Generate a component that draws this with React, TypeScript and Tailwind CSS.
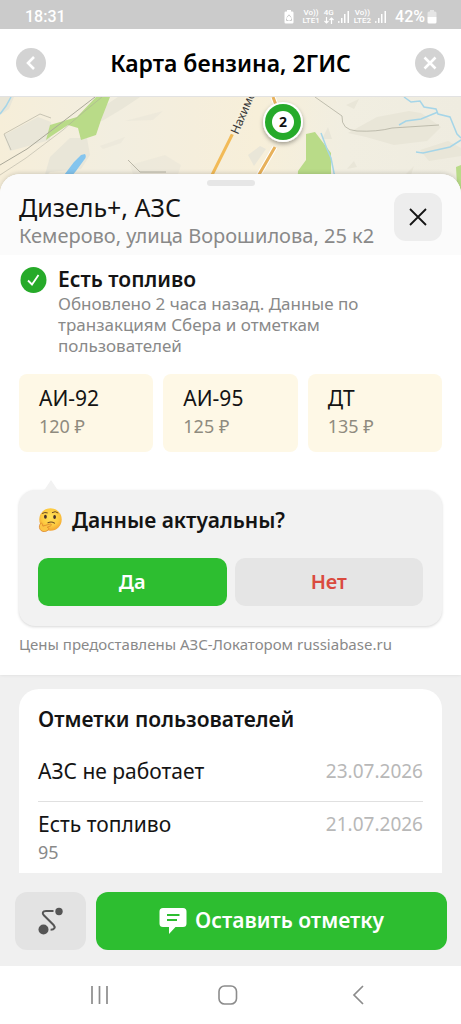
import { ReactNode } from 'react';

type Fuel = { name: string; price: string };
type Mark = { id: number; title: string; date: string; fuel?: string };

const FUELS: Fuel[] = [
  { name: 'АИ-92', price: '120 ₽' },
  { name: 'АИ-95', price: '125 ₽' },
  { name: 'ДТ', price: '135 ₽' },
];

const MARKS: Mark[] = [
  { id: 1, title: 'АЗС не работает', date: '23.07.2026' },
  { id: 2, title: 'Есть топливо', date: '21.07.2026', fuel: '95' },
];

function Signal() {
  return (
    <svg width="12" height="14" viewBox="0 0 12 14" fill="#fff" aria-hidden="true">
      <rect x="0" y="11" width="1.5" height="2" opacity=".8" />
      <rect x="3" y="8" width="1.5" height="5" />
      <rect x="6" y="4" width="1.5" height="9" />
      <rect x="9.5" y="1" width="1.5" height="12" />
    </svg>
  );
}

function NetLabel({ top, children }: { top: string; children: ReactNode }) {
  return (
    <span className="flex flex-col items-center text-[8px] font-medium leading-[8px]">
      <span>{top}</span>
      <span>{children}</span>
    </span>
  );
}

function StatusBar() {
  return (
    <div className="flex h-[29px] items-center justify-between bg-[#cbcbcb] pt-1 pr-6 pl-[25px] font-[Roboto,sans-serif] text-white">
      <span className="text-base font-medium leading-5">18:31</span>
      <div className="flex items-center gap-1">
        <svg width="10" height="14" viewBox="0 0 10 14" className="mr-1" aria-hidden="true">
          <path d="M3 0h4v1.5h1.2A1.3 1.3 0 0 1 9.5 2.8v9.4a1.3 1.3 0 0 1-1.3 1.3H1.8A1.3 1.3 0 0 1 .5 12.2V2.8A1.3 1.3 0 0 1 1.8 1.5H3z" fill="#fff" />
          <path d="M2.8 7.5 5 4.8l2.200 2.700M2.500 8.500v2h2M7.500 8.500v2h-2" fill="none" stroke="#cbcbcb" strokeWidth="1" />
        </svg>
        <NetLabel top="Vo))">LTE1</NetLabel>
        <NetLabel top="4G">
          <svg width="10" height="7" viewBox="0 0 10 7" fill="none" stroke="#fff" strokeWidth="1.2" aria-hidden="true">
            <path d="M2.500 0v6M.500 4l2 2 2-2M7.500 7V1M5.500 3l2-2 2 2" />
          </svg>
        </NetLabel>
        <Signal />
        <NetLabel top="Vo))">LTE2</NetLabel>
        <Signal />
        <span className="ml-1 text-base font-medium leading-5">42%</span>
        <svg width="10" height="14" viewBox="0 0 10 14" className="-ml-0.5" aria-hidden="true">
          <path d="M3 0h4v1.500h1A1.500 1.500 0 0 1 9.500 3v4H.500V3A1.500 1.500 0 0 1 2 1.500h1z" fill="#fff" opacity=".5" />
          <path d="M.500 7h9v5A1.500 1.500 0 0 1 8 13.500H2A1.500 1.500 0 0 1 .500 12z" fill="#fff" />
        </svg>
      </div>
    </div>
  );
}

function Header() {
  return (
    <header className="flex h-[68px] items-center justify-between border-b border-[#e2e2e2] bg-white px-4">
      <button aria-label="Назад" className="flex size-[30px] items-center justify-center rounded-full bg-[#d3d3d3]">
        <svg width="30" height="30" viewBox="0 0 30 30" fill="none" stroke="#fff" strokeWidth="2.6" aria-hidden="true">
          <path d="M18 9l-6 6 6 6" />
        </svg>
      </button>
      <h1 className="text-[23px] font-semibold leading-7 text-black">Карта бензина, 2ГИС</h1>
      <button aria-label="Закрыть" className="flex size-[30px] items-center justify-center rounded-full bg-[#d3d3d3]">
        <svg width="30" height="30" viewBox="0 0 30 30" fill="none" stroke="#fff" strokeWidth="2.6" aria-hidden="true">
          <path d="M9.500 9.500l11 11M20.500 9.500l-11 11" />
        </svg>
      </button>
    </header>
  );
}

function MapView() {
  return (
    <svg viewBox="0 0 461 97" preserveAspectRatio="xMidYMin slice" className="block h-[97px] w-full bg-[#f1eee0]" role="img" aria-label="Карта">
      <defs>
        <linearGradient id="land" x1="0" x2="1" y1="0" y2="0">
          <stop offset="0" stopColor="#f6eed9" />
          <stop offset=".25" stopColor="#f2eee0" />
          <stop offset=".42" stopColor="#f5eedc" />
          <stop offset=".56" stopColor="#f7efd9" />
          <stop offset=".75" stopColor="#f1eee1" />
          <stop offset="1" stopColor="#efece0" />
        </linearGradient>
        <filter id="pinShadow" x="-30%" y="-30%" width="160%" height="170%">
          <feDropShadow dx="0" dy="2" stdDeviation="2" floodOpacity=".35" />
        </filter>
      </defs>
      <rect width="461" height="98" fill="url(#land)" />
      {/* relief */}
      <g fill="#e9e6d8">
        <path d="M0 0h14L9 12 0 18z" />
        <path d="M4 38 38 20l13 5-1 18L10 54z" />
        <path d="M50 60 70 41h17l3 17-9 14-31 3-6 6z" />
        <path d="M85 22 118 0h22l-18 12-20 12z" />
        <path d="M100 49l25-9-4 6-18 6zM130 68l35-10 16 10-3 9h-45zM125 24l38-10-10 9z" opacity=".6" />
        <path d="M348 36 377 20l32-6 12 2 20 14-14 14-33 4-28-8z" />
        <path d="M420 53l28-9 13 7v8l-32 5zM346 8l13-6-5 10zM347 72l7-8 3 6zM406 77l8-8-3 9z" />
        <path d="M248 58l12-9 6 3-12 17zM322 42l6-12 4 12z" />
      </g>
      {/* green zones */}
      <g fill="#b9db88">
        <path d="M46 43 50 28 77 20 96 0h14l-9 23-5 15-15 5-3-12-10-3-18 12z" />
        <path d="M297 98l1-24 8-11V37l9-2 16 21v42zM456 70l5-2v30l-4-10z" />
      </g>
      {/* water */}
      <path d="M58 86 74 65l7-7 4-1q2 3-1 6l-8 11-10 12z" fill="#84c5ee" />
      <g fill="none" stroke="#a5d5e8" strokeWidth="1.5">
        <path d="M0 17 6 9l5-9" />
        <path d="M321 36l6 16 4 9 3 15 4 14" />
        <path d="M404 0l7 5 9-1 4 6 12 2 2 5 12 3 7 17 4 4M399 28l7-4 15-2 17-7M461 43l-11 7-27 6-7-1" />
      </g>
      {/* rails and paths */}
      <g fill="none" stroke="#aaa899" strokeWidth="1">
        <path d="M0 68l27-16 29-22L95 0" />
        <path d="M0 78l26-17 37-28 17-15L102 0" opacity=".5" />
        <path d="M4 37l36-20 11 4M4 37l7 16" opacity=".6" />
        <path d="M128 63l12 12h26" opacity=".8" />
        <path d="M315 0l27 19q-1 14 15 15 20 1 35-3l47-3" opacity=".7" />
      </g>
      {/* roads */}
      <path d="M212 78l19-38 20-40" stroke="#f2ba57" strokeWidth="3" fill="none" />
      <path d="M273 0l6 16M275 50l-22 38" stroke="#fff" strokeWidth="5" fill="none" />
      <path d="M273 0l6 16M275 50l-22 38" stroke="#e7b15b" strokeWidth="3" fill="none" />
      <path d="M229 36l16-36h9l-15 40z" fill="#f7f0dc" />
      <text x="238" y="38" transform="rotate(-67 238 38)" fontSize="12" fill="#373737">Нахимова</text>
      <g filter="url(#pinShadow)">
        <circle cx="283" cy="25" r="20" fill="#fff" />
        <circle cx="283" cy="25" r="18" fill="#26aa29" />
        <circle cx="283" cy="25" r="11" fill="#fff" />
      </g>
      <text x="283" y="30" textAnchor="middle" fontSize="14" fontWeight="700" fill="#111">2</text>
    </svg>
  );
}

function ThinkingFace() {
  return (
    <svg width="24" height="24" viewBox="0 0 24 24" aria-hidden="true">
      <defs>
        <radialGradient id="face" cx=".5" cy=".4" r=".6">
          <stop offset="0" stopColor="#ffe25a" />
          <stop offset=".65" stopColor="#fdca40" />
          <stop offset="1" stopColor="#f3a434" />
        </radialGradient>
      </defs>
      <circle cx="12.5" cy="11.5" r="11.2" fill="url(#face)" />
      <ellipse cx="7.4" cy="8.8" rx="1.400" ry="2" fill="#45302b" />
      <ellipse cx="16.6" cy="9" rx="1.400" ry="2" fill="#45302b" />
      <path d="M4.500 5.300q2.300-1.500 4.800-.500M14.300 4.500q3-2 5.700.3" fill="none" stroke="#6b4a22" strokeWidth="1" strokeLinecap="round" />
      <path d="M10 14.800q3.200-1.800 6.500.3" fill="none" stroke="#6b4a22" strokeWidth="1.1" strokeLinecap="round" />
      <path d="M2.500 15.300c.9-.6 1.800.1 2 1.300l.4 1.500 7.200-2.100c1.300-.3 1.800 1.300.6 1.800l-3.500 1.500c2.300.4 1.600 2 .8 2.700-1.200 1.300-3.500 2-5.300 1.400C1.900 22.500 1 20 1.500 17.500z" fill="#fcc544" stroke="#dd862b" strokeWidth=".8" />
    </svg>
  );
}

function StationSheet() {
  return (
    <section className="relative -mt-5 rounded-t-[20px] bg-white shadow-[0_-1px_4px_rgba(0,0,0,0.15)]">
      <div className="rounded-t-[20px] bg-[#fbfbfb] px-[19px] pt-1.5 pb-[5px]">
        <div className="mx-auto h-1.5 w-12 rounded-full bg-[#e6e6e6]" />
        <div className="flex items-start justify-between pt-[3px]">
          <div className="pt-1">
            <h2 className="text-[25px] leading-7 text-[#141414]">Дизель+, АЗС</h2>
            <p className="pt-px text-[20px] leading-7 text-[#898989]">Кемерово, улица Ворошилова, 25 к2</p>
          </div>
          <button aria-label="Закрыть карточку" className="mt-1 flex size-12 shrink-0 items-center justify-center rounded-xl bg-[#ededed]">
            <svg width="18" height="18" viewBox="0 0 18 18" fill="none" stroke="#141414" strokeWidth="1.8" aria-hidden="true">
              <path d="M1 1l16 16M17 1 1 17" />
            </svg>
          </button>
        </div>
      </div>

      <div className="px-[19px] pt-2.5">
        <div className="flex gap-[11px]">
          <svg width="28" height="28" viewBox="0 0 28 28" className="shrink-0" aria-hidden="true">
            <circle cx="14.500" cy="15" r="13" fill="#26aa29" />
            <path d="M9 15.500l4 4 6.500-9.500" fill="none" stroke="#fff" strokeWidth="1.8" />
          </svg>
          <div>
            <h3 className="text-[21px] font-semibold leading-7 text-[#141414]">Есть топливо</h3>
            <p className="text-[17px] leading-[21px] text-[#898989]">Обновлено 2 часа назад. Данные по транзакциям Сбера и отметкам пользователей</p>
          </div>
        </div>

        <ul className="mt-[18px] grid grid-cols-3 gap-2.5">
          {FUELS.map((f) => (
            <li key={f.name} className="h-[78px] rounded-lg bg-[#fef8e6] px-5 pt-2.5">
              <div className="text-[21px] leading-7 text-[#141414]">{f.name}</div>
              <div className="text-[18px] leading-7 text-[#8f8b7f]">{f.price}</div>
            </li>
          ))}
        </ul>

        <svg width="16" height="10" viewBox="0 0 16 10" className="mt-7 ml-6 block" aria-hidden="true">
          <path d="M8 0l6 9 2 1H0l2-1z" fill="#f2f2f2" />
        </svg>
        <div className="rounded-2xl bg-[#f2f2f2] px-[19px] pt-4 pb-5 shadow-[0_1px_3px_rgba(0,0,0,0.16)]">
          <h3 className="flex items-center gap-2.5 text-[21px] font-semibold leading-7 text-[#141414]">
            <ThinkingFace />
            Данные актуальны?
          </h3>
          <div className="mt-6 grid grid-cols-2 gap-2">
            <button className="h-12 rounded-[10px] bg-[#2dbe30] text-[20px] font-semibold text-white">Да</button>
            <button className="h-12 rounded-[10px] bg-[#e5e5e5] text-[20px] font-semibold text-[#da4a3e]">Нет</button>
          </div>
        </div>
        <p className="pt-2 pb-[21px] text-[15px] leading-5 text-[#898989]">Цены предоставлены АЗС-Локатором russiabase.ru</p>
      </div>
    </section>
  );
}

function UserMarks() {
  return (
    <section className="flex grow flex-col bg-[#f0f0f0] px-[19px] pt-3.5">
      <div className="grow rounded-t-[20px] bg-white px-[19px] pt-4 pb-1.5">
        <h3 className="text-[21px] font-semibold leading-7 text-[#141414]">Отметки пользователей</h3>
        <ul className="divide-y divide-[#e0e0e0] pt-4">
          {MARKS.map((m) => (
            <li key={m.id} className="pt-2 pb-4 last:pb-0">
              <div className="flex items-center justify-between leading-7">
                <span className="text-[21px]  text-[#141414]">{m.title}</span>
                <span className="text-[19px] text-[#b8b8b8]">{m.date}</span>
              </div>
              {m.fuel && <div className="text-[18px] leading-7 text-[#898989]">{m.fuel}</div>}
            </li>
          ))}
        </ul>
      </div>
    </section>
  );
}

function ActionBar() {
  return (
    <div className="flex gap-2.5 bg-[#f0f0f0] pt-[19px] pr-3.5 pb-4 pl-[15px]">
      <button aria-label="Маршрут" className="flex h-[58px] w-[71px] shrink-0 items-center justify-center rounded-xl bg-[#e3e3e3]">
        <svg width="26" height="28" viewBox="0 0 26 28" fill="none" aria-hidden="true">
          <circle cx="21" cy="4.500" r="3.700" fill="#555" />
          <circle cx="5.500" cy="22.500" r="5" fill="#555" />
          <path d="M15.500 4H8c-3.500 0-4 2.500-2.200 4.300l9.800 9.700c2 2.300 1 4.800-3 4.800" stroke="#555" strokeWidth="2" />
        </svg>
      </button>
      <button className="flex h-[58px] grow items-center justify-center gap-2 rounded-xl bg-[#2dbe30] text-[21px] font-semibold text-white">
        <svg width="28" height="28" viewBox="0 0 28 28" aria-hidden="true">
          <path d="M4 1h20a3.500 3.500 0 0 1 3.500 3.500v12A3.500 3.500 0 0 1 24 20h-7.500L10 27v-7H4a3.500 3.500 0 0 1-3.500-3.500v-12A3.500 3.500 0 0 1 4 1z" fill="#fff" />
          <path d="M8 8h12.500M8 13h10" stroke="#2dbe30" strokeWidth="2" />
        </svg>
        Оставить отметку
      </button>
    </div>
  );
}

function SystemNav() {
  return (
    <nav className="flex h-[58px] shrink-0 items-center justify-between bg-white pr-[92px] pl-[86px]">
      <button aria-label="Недавние приложения">
        <svg width="26" height="20" viewBox="0 0 26 20" fill="none" stroke="#8c8c8c" strokeWidth="1.7" aria-hidden="true">
          <path d="M6 1v18M13.500 1v18M21 1v18" />
        </svg>
      </button>
      <button aria-label="Домой">
        <svg width="26" height="20" viewBox="0 0 26 20" fill="none" stroke="#8c8c8c" strokeWidth="1.6" aria-hidden="true">
          <rect x="4" y="1" width="17.500" height="18" rx="5.500" />
        </svg>
      </button>
      <button aria-label="Системная кнопка «Назад»">
        <svg width="26" height="20" viewBox="0 0 26 20" fill="none" stroke="#8c8c8c" strokeWidth="1.7" aria-hidden="true">
          <path d="M20 1l-9 9 9 9" />
        </svg>
      </button>
    </nav>
  );
}

export default function App() {
  return (
    <div className="flex min-h-screen flex-col overflow-hidden bg-white font-['Noto_Sans',sans-serif]">
      <StatusBar />
      <Header />
      <main className="flex grow flex-col">
        <MapView />
        <StationSheet />
        <UserMarks />
      </main>
      <ActionBar />
      <SystemNav />
    </div>
  );
}
